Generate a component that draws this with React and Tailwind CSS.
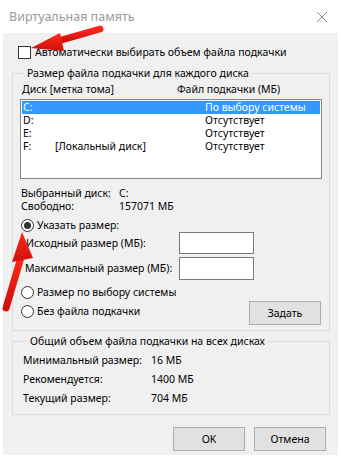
import React from 'react';

const font = { fontFamily: '"Segoe UI", "Noto Sans", "Open Sans", sans-serif' };

const Radio = ({ checked, label }) => (
  <div className="flex items-center h-[19px]">
    <span className="w-[13px] h-[13px] rounded-full border border-[#333] bg-white flex items-center justify-center">
      {checked && <span className="w-[7px] h-[7px] rounded-full bg-[#333]" />}
    </span>
    <span className="ml-[3px]">{label}</span>
  </div>
);

const Btn = ({ children, className = '' }) => (
  <div className={`h-[24px] w-[72px] border border-[#adadad] bg-[#e1e1e1] flex items-center justify-center ${className}`}>
    {children}
  </div>
);

const drives = [
  { d: 'C:', label: '', size: 'По выбору системы', selected: true },
  { d: 'D:', label: '', size: 'Отсутствует' },
  { d: 'E:', label: '', size: 'Отсутствует' },
  { d: 'F:', label: '[Локальный диск]', size: 'Отсутствует' },
];

export default function App() {
  return (
    <div className="relative w-[341px] h-[460px] bg-white text-[10.5px] leading-[13px] text-black whitespace-nowrap overflow-hidden" style={font}>
      {/* title bar */}
      <div className="h-[33px] flex items-center justify-between pl-[9px] pr-[12px]">
        <span className="text-[#9a9a9a] text-[12.5px]">Виртуальная память</span>
        <svg width="12" height="12" viewBox="0 0 12 12" className="mr-[1px]">
          <path d="M1 1L11 11M11 1L1 11" stroke="#8a8a8a" strokeWidth="1" />
        </svg>
      </div>

      <div className="mx-[3px] h-[422px] bg-[#f0f0f0] px-[9px] pt-[12px]">
        {/* auto checkbox */}
        <div className="flex items-center ml-[6px] h-[14px]">
          <span className="w-[13px] h-[13px] border border-[#333] bg-white" />
          <span className="ml-[4px]">Автоматически выбирать объем файла подкачки</span>
        </div>

        {/* per-disk group */}
        <fieldset className="mt-[8px] border border-[#dcdcdc] px-[7px] pb-[5px] w-[318px]">
          <legend className="ml-[4px] px-[3px]">Размер файла подкачки для каждого диска</legend>
          <div className="flex h-[15px] items-center pl-[2px] mt-[2px]">
            <span className="w-[155px]">Диск [метка тома]</span>
            <span>Файл подкачки (МБ)</span>
          </div>
          <div className="mt-[2px] h-[80px] border border-[#828790] bg-white p-[1px]">
            {drives.map((r) => (
              <div
                key={r.d}
                className={`flex h-[13px] items-center ${r.selected ? 'bg-[#3399ff] text-white' : ''}`}
              >
                <span className="w-[33px] pl-[1px]">{r.d}</span>
                <span className="w-[150px]">{r.label}</span>
                <span>{r.size}</span>
              </div>
            ))}
          </div>

          <div className="mt-[8px] pl-[1px]">
            <div className="flex">
              <span className="w-[98px]">Выбранный диск:</span>
              <span>C:</span>
            </div>
            <div className="flex">
              <span className="w-[98px]">Свободно:</span>
              <span>157071 МБ</span>
            </div>
          </div>

          <div className="mt-[3px] pl-[1px]">
            <Radio checked label="Указать размер:" />
            <div className="flex items-center justify-between h-[22px] pl-[5px] pr-[68px] mt-[-3px]">
              <span>Исходный размер (МБ):</span>
              <span className="w-[75px] h-[22px] border border-[#7a7a7a] bg-white" />
            </div>
            <div className="flex items-center justify-between h-[23px] pl-[4px] pr-[68px] mt-[3px]">
              <span>Максимальный размер (МБ):</span>
              <span className="w-[75px] h-[23px] border border-[#7a7a7a] bg-white" />
            </div>
            <div className="mt-[3px]">
              <Radio label="Размер по выбору системы" />
            </div>
            <div className="flex items-start justify-between pr-[1px]">
              <Radio label="Без файла подкачки" />
              <Btn className="mt-[-1px]">Задать</Btn>
            </div>
          </div>
        </fieldset>

        {/* totals group */}
        <fieldset className="mt-[4px] border border-[#dcdcdc] px-[10px] pb-[9px] w-[318px]">
          <legend className="ml-[4px] px-[3px]">Общий объем файла подкачки на всех дисках</legend>
          <div className="mt-[6px] flex flex-col gap-[6px]">
            <div className="flex"><span className="w-[128px]">Минимальный размер:</span><span>16 МБ</span></div>
            <div className="flex"><span className="w-[128px]">Рекомендуется:</span><span>1400 МБ</span></div>
            <div className="flex"><span className="w-[128px]">Текущий размер:</span><span>704 МБ</span></div>
          </div>
        </fieldset>

        <div className="flex justify-end gap-[9px] mt-[12px] pr-[3px]">
          <Btn>OK</Btn>
          <Btn>Отмена</Btn>
        </div>
      </div>

      {/* red annotation arrows */}
      <svg className="absolute left-0 top-0 pointer-events-none" width="341" height="460">
        <defs>
          <linearGradient id="ar" x1="0" y1="0" x2="0" y2="1">
            <stop offset="0" stopColor="#ff2a1a" />
            <stop offset="1" stopColor="#d0100c" />
          </linearGradient>
        </defs>
        <path d="M100 29 L58 41" stroke="url(#ar)" strokeWidth="7" strokeLinecap="round" />
        <path d="M31 48 L60 33 L64 51 Z" fill="url(#ar)" />
        <path d="M6 308 L22 254" stroke="url(#ar)" strokeWidth="7" strokeLinecap="round" />
        <path d="M22 232 L12 262 L33 258 Z" fill="url(#ar)" />
      </svg>
    </div>
  );
}
